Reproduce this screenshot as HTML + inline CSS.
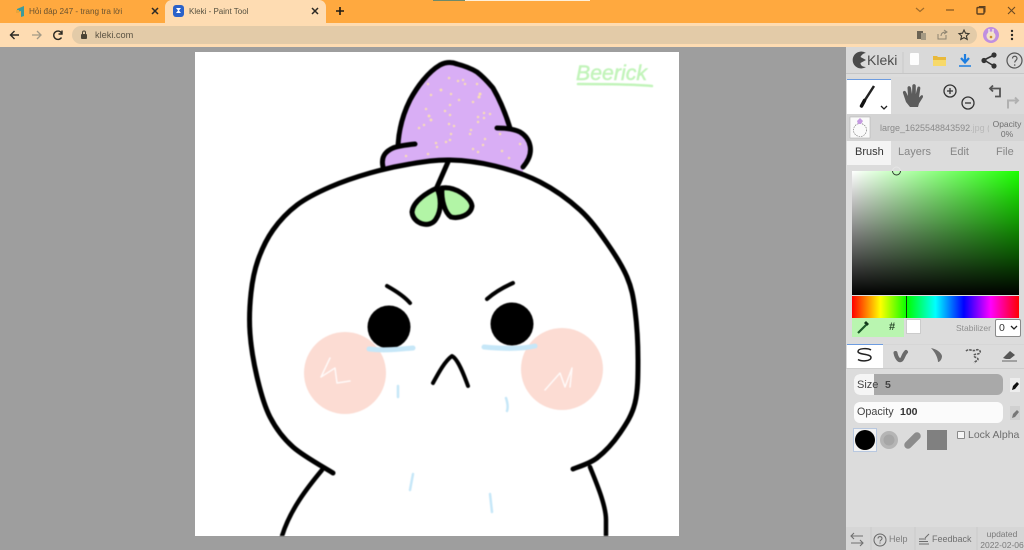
<!DOCTYPE html>
<html><head><meta charset="utf-8">
<style>
html,body{margin:0;padding:0;width:1024px;height:550px;overflow:hidden;background:#9e9e9e;font-family:"Liberation Sans",sans-serif}
.a{position:absolute}
.t{position:absolute;white-space:nowrap}
</style></head>
<body>
<!-- browser chrome -->
<div class="a" style="left:0;top:0;width:1024px;height:23px;background:#ffa93f"></div>
<div class="a" style="left:433px;top:0;width:32px;height:1px;background:#6e8a6a"></div>
<div class="a" style="left:465px;top:0;width:125px;height:1px;background:#fff0d8"></div>
<div class="a" style="left:0;top:23px;width:1024px;height:24px;background:#fedcb2"></div>
<div class="a" style="left:165px;top:0;width:161px;height:23px;background:#fedcb2;border-radius:7px 7px 0 0"></div>
<div class="t" style="left:29px;top:5px;font-size:8.200px;line-height:13px;color:#6a5330">Hỏi đáp 247 - trang tra lời</div>
<div class="t" style="left:189px;top:5px;font-size:8px;line-height:13px;color:#55503f">Kleki - Paint Tool</div>
<div class="a" style="left:72px;top:26px;width:905px;height:18px;border-radius:9px;background:#e3cba8"></div>
<div class="t" style="left:95px;top:29px;font-size:9.200px;line-height:13px;color:#5a5242">kleki.com</div>

<svg class="a" style="left:0;top:0" width="1024" height="48" viewBox="0 0 1024 48" fill="none">
<path d="M17 9l7-3v10l-3 1v-6l-4 1z" fill="#3e9b9b"/><path d="M16 10h3v3h-3z" fill="#e8a53a"/>
<rect x="173" y="5" width="11" height="12" rx="3" fill="#2b62c9"/><path d="M176 8h5l-2 2.500 2 2.500h-5l2-2.500z" fill="#fff"/>
<path d="M152 8l6 6M158 8l-6 6M312 8l6 6M318 8l-6 6" stroke="#2c2a26" stroke-width="1.500"/>
<path d="M340 7v8M336 11h8" stroke="#1e1a14" stroke-width="1.600"/>
<path d="M11 35h8M14.500 31l-4 4 4 4" stroke="#2a2822" stroke-width="1.400"/>
<path d="M32 35h8M37 31l4 4-4 4" stroke="#a39a86" stroke-width="1.300"/>
<path d="M61.500 33a4.200 4.200 0 1 0 0 4.500M62 30.500v3.500h-3.500" stroke="#2a2822" stroke-width="1.400"/>
<rect x="81" y="34" width="6" height="5" rx="1" fill="#4a4335"/><path d="M82.500 34v-1.500a1.500 1.500 0 0 1 3 0V34" stroke="#4a4335"/>
<path d="M916 8l4 3.500 4-3.500" stroke="#a06c2a" stroke-width="1.200"/>
<path d="M946 10h8" stroke="#8a5c22" stroke-width="1.300"/>
<rect x="977" y="7.500" width="7" height="6.500" rx="1" stroke="#5d4020" stroke-width="1.400"/><path d="M979 6.500h6v6" stroke="#5d4020"/>
<path d="M1008 7l7 7M1015 7l-7 7" stroke="#6b4a24" stroke-width="1.100"/>
<rect x="917" y="31" width="6" height="8" fill="#6b6354"/><rect x="921" y="33" width="5" height="7" fill="#a59a84"/>
<path d="M938 34v5h8v-4M941 36c0-3 2-4 5-4M944 30l3 2-3 2" stroke="#8c8370" stroke-width="1"/>
<path d="M964 30l1.500 3.200 3.500.4-2.600 2.300.8 3.500-3.200-1.800-3.200 1.800.8-3.500-2.600-2.300 3.500-.4z" stroke="#3a362c" stroke-width="1.100"/>
<circle cx="991" cy="35" r="8" fill="#c08fe0"/><circle cx="991" cy="36" r="4.500" fill="#f4e3c6"/><path d="M989 29v4M993 29v4" stroke="#f6efe4" stroke-width="1.300"/><circle cx="991" cy="37" r="1.300" fill="#c98a30"/>
<circle cx="1012" cy="31" r="1.200" fill="#2a2822"/><circle cx="1012" cy="35" r="1.200" fill="#2a2822"/><circle cx="1012" cy="39" r="1.200" fill="#2a2822"/>
</svg>

<!-- canvas -->
<div class="a" style="left:195px;top:52px;width:484px;height:484px;background:#fff"></div>
<svg class="a" style="left:195px;top:52px;filter:blur(.45px)" width="484" height="484" viewBox="195 52 484 484" fill="none" stroke-linecap="round" stroke-linejoin="round">
<!-- hat -->
<path d="M398 145C399 128 404 112 410 100C417 87 428 72 440 65C446 62 452 62 457 64C465 66 472 69 477 72C486 79 492 87 493 88C500 100 506 115 510 128L520 132C530 138 534 152 523 167L523 200L383 200L383 167C381 158 384 152 393 148Z" fill="#d9aef5"/>
<g fill="#fbe0b4" stroke="#fbe0b4" stroke-width=".5">
<circle cx="428" cy="84" r="1"/><circle cx="449" cy="78" r="1"/><circle cx="458" cy="81" r="1"/><circle cx="463" cy="80" r="1"/><circle cx="465" cy="84" r="1"/><circle cx="477" cy="84" r="1"/><circle cx="441" cy="90" r="1.200"/><circle cx="431" cy="95" r="1"/><circle cx="451" cy="94" r="1"/><circle cx="480" cy="94" r="1.300"/><circle cx="479" cy="97" r="1.300"/><circle cx="459" cy="100" r="1"/><circle cx="473" cy="102" r="1"/><circle cx="450" cy="105" r="1"/><circle cx="426" cy="109" r="1"/><circle cx="445" cy="111" r="1"/><circle cx="429" cy="116" r="1.200"/><circle cx="431" cy="120" r="1.200"/><circle cx="450" cy="115" r="1"/><circle cx="484" cy="113" r="1"/><circle cx="490" cy="114" r="1"/><circle cx="478" cy="117" r="1"/><circle cx="484" cy="118" r="1"/><circle cx="478" cy="122" r="1"/><circle cx="424" cy="125" r="1"/><circle cx="419" cy="128" r="1"/><circle cx="449" cy="124" r="1"/><circle cx="454" cy="126" r="1"/><circle cx="471" cy="130" r="1"/><circle cx="470" cy="134" r="1"/><circle cx="451" cy="134" r="1"/><circle cx="450" cy="140" r="1"/><circle cx="446" cy="142" r="1"/><circle cx="436" cy="143" r="1"/><circle cx="437" cy="147" r="1"/><circle cx="485" cy="139" r="1"/><circle cx="500" cy="134" r="1"/><circle cx="483" cy="145" r="1"/><circle cx="520" cy="144" r="1"/><circle cx="473" cy="149" r="1"/><circle cx="478" cy="152" r="1"/><circle cx="502" cy="151" r="1"/><circle cx="509" cy="158" r="1"/><circle cx="428" cy="154" r="1"/><circle cx="406" cy="156" r="1"/>
</g>
<path d="M398 145C399 128 404 112 410 100C417 87 428 72 440 65C446 62 452 62 457 64C465 66 472 69 477 72C486 79 492 87 493 88C500 100 506 115 510 128" stroke="#000" stroke-width="5"/>
<path d="M415 144C405 145 398 146 393 148C384 152 381 158 383 167" stroke="#000" stroke-width="5"/>
<path d="M497 128C506 128 514 129 520 132C530 138 536 152 523 167" stroke="#000" stroke-width="5"/>
<!-- body -->
<path d="M333 473C326.300 468.700 303.500 456.300 293 447C282.500 437.700 276 428.700 270 417C264 405.300 260.300 391 257 377C253.700 363 251 347 250 333C249 319 249.700 305.200 251 293C252.300 280.800 254.300 270.500 258 260C261.700 249.500 266.500 239.200 273 230C279.500 220.800 287.500 212.200 297 205C306.500 197.800 317.800 192.300 330 187C342.200 181.700 356.700 176.800 370 173C383.300 169.200 396.700 166.200 410 164C423.300 161.800 435.800 159.700 450 160C464.200 160.300 480 162.300 495 166C510 169.700 525.800 174.700 540 182C554.200 189.300 568.800 199.800 580 210C591.200 220.200 599.200 231.800 607 243C614.800 254.200 622.300 265.800 627 277C631.700 288.200 633.200 296.200 635 310C636.800 323.800 638 344.500 638 360C638 375.500 638 390.800 635 403C632 415.200 626.300 423.800 620 433C613.700 442.200 604.800 452 597 458C589.200 464 577 467.200 573 469" fill="#fff" stroke="#000" stroke-width="5"/>
<path d="M322 470C307 488 290 510 282 536" stroke="#000" stroke-width="4.500"/>
<path d="M590 467C596 482 606 505 606 520L606 536" stroke="#000" stroke-width="4.500"/>
<!-- leaves -->
<path d="M448 162L437 187" stroke="#000" stroke-width="5"/>
<path d="M437 188C428 192 413 201 412 212C413 224 430 229 436 219C442 210 441 197 437 188Z" fill="#b2f5a6" stroke="#000" stroke-width="5"/>
<path d="M442 188C455 186 471 197 472 206C471 215 459 219 451 217C445 213 441 200 442 188Z" fill="#b2f5a6" stroke="#000" stroke-width="5"/>
<!-- cheeks -->
<circle cx="345" cy="373" r="41" fill="#fcdcd3"/>
<circle cx="562" cy="369" r="41" fill="#fcdcd3"/>
<path d="M330 358L321 377L335 368L337 383L350 381" stroke="#fff" stroke-width="1.500" opacity=".85"/>
<path d="M545 390L560 373L565 387L572 368L570 387" stroke="#fff" stroke-width="1.500" opacity=".85"/>
<!-- face -->
<circle cx="389" cy="327" r="21.500" fill="#000"/>
<circle cx="512" cy="324" r="21.500" fill="#000"/>
<path d="M387 286C396 291 404 296 410 303" stroke="#000" stroke-width="4"/>
<path d="M487 299C495 292 504 287 513 283" stroke="#000" stroke-width="4"/>
<path d="M433 383C439 372 445 361 452 356C458 359 464 375 468 386" stroke="#000" stroke-width="4"/>
<!-- tears -->
<path d="M369 349C385 351 400 349 413 348M484 347C505 349 522 349 535 346" stroke="#c6e7f8" stroke-width="5"/>
<path d="M398 386L398 397M506 398C508 404 508 408 507 411M413 474L410 490M490 494L492 512" stroke="#c6e7f8" stroke-width="2.500"/>
<!-- signature -->
<text x="576" y="80" font-family="Liberation Sans, sans-serif" font-style="italic" font-size="21" fill="#c2f4ba" stroke="#c2f4ba" stroke-width=".5" textLength="71" lengthAdjust="spacingAndGlyphs">Beerick</text>
<path d="M578 84C600 84 630 84 652 86" stroke="#c2f4ba" stroke-width="2.500"/>
</svg>

<!-- right panel -->
<div class="a" style="left:846px;top:47px;width:178px;height:503px;background:#dcdcdc"></div>
<div class="a" style="left:846px;top:47px;width:178px;height:26px;background:#d9d9d9;border-bottom:1px solid #c6c6c6"></div>
<div class="a" style="left:846px;top:77px;width:178px;height:37px;background:#dadada"></div>
<div class="a" style="left:847px;top:79px;width:44px;height:35px;background:#fff;border-top:1px solid #6d9ce0"></div>
<div class="a" style="left:846px;top:114px;width:178px;height:27px;background:#d4d4d4"></div>
<div class="a" style="left:847px;top:141px;width:44px;height:24px;background:#f4f4f4"></div>
<div class="t" style="left:867px;top:52px;font-size:14px;line-height:17px;color:#4d4d4d">Kleki</div>
<div class="t" style="left:880px;top:122px;font-size:9px;line-height:12px;color:#8a8a8a;width:109px;overflow:hidden">large_1625548843592<span style="color:#b8b8b8">.jpg (</span></div>
<div class="t" style="left:992px;top:120px;width:30px;text-align:center;font-size:8.500px;line-height:9.500px;color:#6f6f6f">Opacity<br>0%</div>
<div class="t" style="left:855px;top:145px;font-size:11px;line-height:14px;color:#333">Brush</div>
<div class="t" style="left:898px;top:145px;font-size:11px;line-height:14px;color:#868686">Layers</div>
<div class="t" style="left:950px;top:145px;font-size:11px;line-height:14px;color:#868686">Edit</div>
<div class="t" style="left:996px;top:145px;font-size:11px;line-height:14px;color:#868686">File</div>

<!-- color picker -->
<div class="a" style="left:852px;top:171px;width:167px;height:124px;background:linear-gradient(to bottom,rgba(0,0,0,0),#000),linear-gradient(to right,#fff,#1bff00)"></div>
<div class="a" style="left:852px;top:296px;width:167px;height:22px;background:linear-gradient(to right,#f00,#ff0 17%,#0f0 33%,#0ff 50%,#00f 67%,#f0f 83%,#f00)"></div>
<div class="a" style="left:906px;top:296px;width:1px;height:22px;background:#0a3a0a"></div>
<div class="a" style="left:852px;top:318px;width:52px;height:19px;background:#b9f5b0"></div>
<div class="a" style="left:906px;top:319px;width:15px;height:15px;background:#fff;border:.5px solid #ccc;box-sizing:border-box"></div>
<div class="t" style="left:889px;top:320px;font-size:11px;line-height:14px;font-weight:bold;color:#2c4a2c">#</div>
<div class="t" style="left:956px;top:323px;font-size:8.500px;line-height:11px;color:#8f8f8f">Stabilizer</div>
<div class="a" style="left:995px;top:319px;width:26px;height:18px;background:#fff;border:1px solid #8a8a8a;box-sizing:border-box;border-radius:2px"></div>
<div class="t" style="left:999px;top:321px;font-size:10.500px;line-height:14px;color:#333">0</div>

<!-- brush tabs -->
<div class="a" style="left:846px;top:344px;width:178px;height:1px;background:#d6d6d6"></div>
<div class="a" style="left:847px;top:344px;width:36px;height:24px;background:#fff;border-top:1px solid #6d9ce0;box-sizing:border-box"></div>
<div class="a" style="left:846px;top:368px;width:178px;height:1px;background:#cdcdcd"></div>

<!-- sliders -->
<div class="a" style="left:854px;top:374px;width:149px;height:21px;border-radius:6px;background:#a9a9a9;overflow:hidden"><div style="width:20px;height:21px;background:#f5f5f5"></div></div>
<div class="t" style="left:857px;top:379px;font-size:11px;line-height:13px;color:#444">Size</div>
<div class="t" style="left:885px;top:379px;font-size:10.500px;line-height:13px;font-weight:bold;color:#444">5</div>
<div class="a" style="left:854px;top:402px;width:149px;height:21px;border-radius:6px;background:#fbfbfb"></div>
<div class="t" style="left:857px;top:406px;font-size:10.800px;line-height:13px;color:#444">Opacity</div>
<div class="t" style="left:900px;top:406px;font-size:10.500px;line-height:13px;font-weight:bold;color:#333">100</div>
<div class="a" style="left:1010px;top:378px;width:10px;height:14px;background:#ededed"></div>
<div class="a" style="left:1010px;top:406px;width:10px;height:14px;background:#d0d0d0"></div>

<!-- shapes -->
<div class="a" style="left:853px;top:428px;width:24px;height:24px;background:#f2f2f2;border:1px solid #b8c8e0;box-sizing:border-box"></div>
<div class="a" style="left:957px;top:431px;width:8px;height:8px;background:#f6f6f6;border:1px solid #8a8a8a;box-sizing:border-box;border-radius:1px"></div>
<div class="t" style="left:968px;top:428px;font-size:10.500px;line-height:14px;color:#6d6d6d">Lock Alpha</div>

<!-- footer -->
<div class="a" style="left:846px;top:527px;width:178px;height:23px;background:#d6d6d6"></div>
<div class="t" style="left:889px;top:533px;font-size:9px;line-height:12px;color:#7d7d7d">Help</div>
<div class="t" style="left:932px;top:533px;font-size:9px;line-height:12px;color:#707070">Feedback</div>
<div class="t" style="left:979px;top:529px;width:46px;text-align:center;font-size:8.500px;line-height:10.500px;color:#7a7a7a">updated<br>2022-02-06</div>

<!-- panel icons -->
<svg class="a" style="left:846px;top:47px" width="178" height="503" viewBox="846 47 178 503" fill="none">
<path d="M866 53a8.500 8.500 0 1 0 0 14c-4 0-5.500-2-5.500-4l5.500-3-5.500-3c1-2 3-4 5.500-4z" fill="#4a4a4a"/>
<path d="M903 52v21" stroke="#c9c9c9"/>
<rect x="910" y="53" width="9" height="12" rx="1" fill="#fdfdfd"/>
<path d="M933 56h4l1 1h8v9h-13z" fill="#e9b93a"/><path d="M933 60h13v6h-13z" fill="#f7d96a"/>
<path d="M965 54v8M961 58l4 4.500 4-4.500" stroke="#1e7ee0" stroke-width="2.200"/><path d="M959 66h12" stroke="#1e7ee0" stroke-width="1.500"/>
<path d="M994 55l-10 5 10 6" stroke="#333" stroke-width="1.600"/><circle cx="984" cy="60.500" r="2.600" fill="#333"/><circle cx="994" cy="55" r="2.600" fill="#333"/><circle cx="994" cy="66" r="2.600" fill="#333"/>
<circle cx="1014.500" cy="60.500" r="7.500" stroke="#555" stroke-width="1.200"/><path d="M1012.500 58.500c0-3 4.500-3 4.500 0 0 2-2.300 2-2.300 4" stroke="#555" stroke-width="1.200"/><circle cx="1014.700" cy="65" r=".8" fill="#555"/>
<!-- brush tool -->
<path d="M874 86L865 100" stroke="#222" stroke-width="2.500"/><path d="M864.500 100.500L861.500 106" stroke="#111" stroke-width="3.500" stroke-linecap="round"/>
<path d="M881 106l3 3 3-3" stroke="#222" stroke-width="1.300"/>
<!-- hand -->
<path d="M906 102l-3-9c-.5-2 2-3 3-1l2 4-.5-8c0-2.500 3-2.500 3.500 0l1 6 .3-8c0-2.500 3.500-2.500 3.500 0l0 8 1.500-6c.5-2.500 3.500-1.500 3 .5l-1.300 9 2-2c1.500-1 2.500.5 1.800 2l-3.800 6-1 3.500h-8z" fill="#5c5c5c"/>
<!-- zoom -->
<circle cx="950" cy="91" r="6" stroke="#333" stroke-width="1.300"/><path d="M947 91h6M950 88v6" stroke="#333" stroke-width="1.300"/>
<circle cx="968" cy="103" r="6" stroke="#333" stroke-width="1.300"/><path d="M965 103h6" stroke="#333" stroke-width="1.300"/>
<!-- undo redo -->
<path d="M993 85.500l-3 3 3 3M990 88.500h10v8h-5" stroke="#555" stroke-width="1.800"/>
<path d="M1015 97.500l3 3-3 3M1018 100.500h-10v8" stroke="#b0b0b0" stroke-width="2"/>
<!-- thumb -->
<rect x="850" y="117" width="20" height="21" fill="#fafafa" stroke="#b5b5b5" stroke-width=".6"/>
<circle cx="860" cy="130" r="6.500" stroke="#666" stroke-width=".6" stroke-dasharray="1.500 1"/><path d="M857 121l3-3 3 3-2 3h-3z" fill="#c49ae0"/>
<!-- picker cursor -->
<path d="M892.500 171a4 4 0 1 0 8 0" stroke="#2c3a2c" stroke-width="1"/><path d="M892.500 171a4 4 0 0 1 8 0" stroke="#e6e6e6" stroke-width="1"/>
<!-- eyedropper -->
<path d="M858 333l8-8" stroke="#1d5b2a" stroke-width="2.200"/><path d="M864 323l3 3 2-2-3-3z" fill="#123a1b"/>
<!-- select arrow -->
<path d="M1011 326l3 3 3-3" stroke="#222" stroke-width="1.300"/>
<!-- brush tabs icons -->
<path d="M871 350c-3-2-13-2-13 1.500 0 3.500 13 2 13 6 0 4-10 4-13 2" stroke="#222" stroke-width="1.500"/>
<path d="M895.500 353c1 5 3.500 8 5.500 7 2-1 2-5 5-8" stroke="#6b6b6b" stroke-width="4" stroke-linecap="round"/>
<path d="M931 348c5 1 10 4 11 8 0 3-2 6-4 6 0-4-3-10-7-14z" fill="#6e6e6e"/>
<path d="M966 351c3-3 7 1 10-1 3-1 5 1 4 3-2 2-6 0-6 3 1 2 3 1 4 3 0 2-3 2-4 4" stroke="#5a5a5a" stroke-width="1.600" stroke-dasharray="2.500 1"/>
<path d="M1003 358l7-7 5 4-5 4h-4z" fill="#555"/><path d="M1002 361h15" stroke="#666"/>
<!-- pen pressure -->
<path d="M1012 390l1-4 4-4 2 2-4 5z" fill="#111"/>
<path d="M1012 418l1-4 4-4 2 2-4 5z" fill="#777"/>
<!-- shape buttons -->
<circle cx="865" cy="440" r="10" fill="#000"/>
<circle cx="889" cy="440" r="9" fill="#b5b5b5"/><circle cx="889" cy="440" r="5.500" fill="#a6a6a6"/>
<path d="M908 445l9-9" stroke="#8c8c8c" stroke-width="7.500" stroke-linecap="round"/>
<rect x="927" y="430" width="20" height="20" fill="#808080"/>
<!-- footer -->
<path d="M851 536h12M854 533l-3 3 3 3M851 543h12M860 540l3 3-3 3" stroke="#707070" stroke-width="1.100"/>
<path d="M871 527v23M915 527v23M977 527v23" stroke="#c9c9c9"/>
<circle cx="880" cy="540" r="6" stroke="#666" stroke-width="1"/><path d="M878 538.500c0-2.500 4-2.500 4 0 0 1.500-2 1.500-2 3" stroke="#666"/><circle cx="880" cy="543" r=".6" fill="#666"/>
<path d="M919 539h7M919 541.500h9M919 544h10M925 538l4-4" stroke="#6d6d6d"/>
</svg>
</body></html>
